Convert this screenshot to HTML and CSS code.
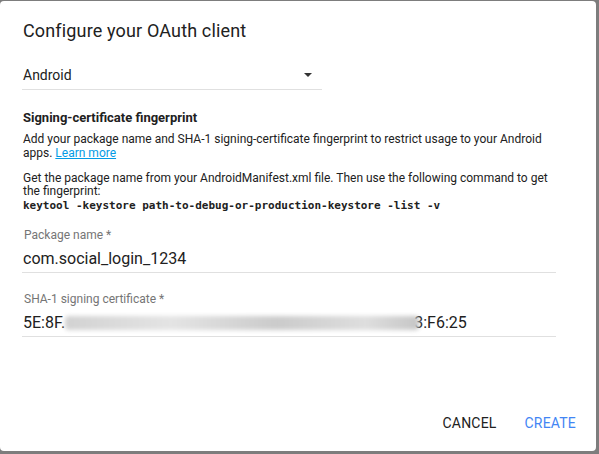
FILE: index.html
```html
<!DOCTYPE html>
<html>
<head>
<meta charset="utf-8">
<link rel="stylesheet" href="styles.css">
</head>
<body>
<div class="dialog">
  <h1 class="title">Configure your OAuth client</h1>
  <div class="select">
    <span>Android</span>
    <svg class="arrow" width="8" height="4" viewBox="0 0 8 4"><path d="M0 0 L8 0 L4 4 Z" fill="#333"/></svg>
  </div>
  <h2 class="subhead">Signing-certificate fingerprint</h2>
  <p class="para">Add your package name and SHA-1 signing-certificate fingerprint to restrict usage to your Android apps. <a class="link">Learn more</a></p>
  <p class="para">Get the package name from your AndroidManifest.xml file. Then use the following command to get the fingerprint:<br><code class="code">keytool -keystore path-to-debug-or-production-keystore -list -v</code></p>
  <div class="field">
    <label class="label">Package name *</label>
    <div class="value">com.social_login_1234</div>
  </div>
  <div class="field field2">
    <label class="label">SHA-1 signing certificate *</label>
    <div class="value"><span>5E:8F.</span><span class="blur"></span><span class="tail">3:F6:25</span></div>
  </div>
  <div class="actions">
    <span class="btn">CANCEL</span>
    <span class="btn primary">CREATE</span>
  </div>
</div>
</body>
</html>
```
FILE: styles.css
```css
html, body {
  margin: 0;
  padding: 0;
}
body {
  background: #7d7d7d;
  width: 599px;
  height: 454px;
  overflow: hidden;
  font-family: Roboto, "Noto Sans", sans-serif;
  color: #212121;
}
.dialog {
  box-sizing: border-box;
  margin-top: 1px;
  width: 596px;
  height: 450px;
  background: #fff;
  border-radius: 4px;
  padding: 0 0 0 22px;
  display: flex;
  flex-direction: column;
}
.title {
  margin: 18px 0 0 1px;
  font-size: 18px;
  font-weight: 400;
  line-height: 24px;
  letter-spacing: 0.15px;
  color: #212121;
}
.select {
  margin-top: 18px;
  width: 300px;
  height: 29px;
  border-bottom: 1px solid #e0e0e0;
  display: flex;
  align-items: center;
  justify-content: space-between;
  font-size: 14px;
  padding: 0 0 0 1px;
  box-sizing: border-box;
}
.arrow {
  margin-right: 10px;
}
.subhead {
  margin: 20px 0 0 1px;
  font-size: 13px;
  font-weight: 700;
  line-height: 16px;
}
.para {
  margin: 6px 0 0 1px;
  font-size: 12px;
  line-height: 14px;
  width: 540px;
}
.para + .para {
  margin-top: 12px;
  line-height: 13px;
}
.link {
  color: #039be5;
  text-decoration: underline;
}
.code {
  font-family: "DejaVu Sans Mono", "Liberation Mono", monospace;
  font-weight: 700;
  font-size: 11px;
  line-height: 16px;
}
.field {
  margin-top: 14px;
  width: 534px;
  border-bottom: 1px solid #e0e0e0;
}
.field2 {
  margin-top: 19px;
}
.label {
  display: block;
  font-size: 12px;
  color: #757575;
  line-height: 14px;
  padding-left: 2px;
}
.value {
  font-size: 16px;
  line-height: 20px;
  margin-top: 7px;
  padding: 0 0 3px 1px;
  display: flex;
  align-items: center;
}
.blur {
  display: inline-block;
  width: 354px;
  height: 14px;
  background: linear-gradient(90deg, #d2d2d2, #e4e4e4 30%, #cbcbcb 60%, #dedede 85%, #c6c6c6);
  filter: blur(2px);
  border-radius: 4px;
}
.tail {
  margin-left: -5px;
}
.actions {
  margin-top: auto;
  margin-bottom: 20px;
  display: flex;
  justify-content: flex-end;
  gap: 28px;
  padding-right: 20px;
  font-size: 14px;
}
.btn {
  letter-spacing: 0.2px;
  color: #212121;
}
.primary {
  color: #4285f4;
}
```
